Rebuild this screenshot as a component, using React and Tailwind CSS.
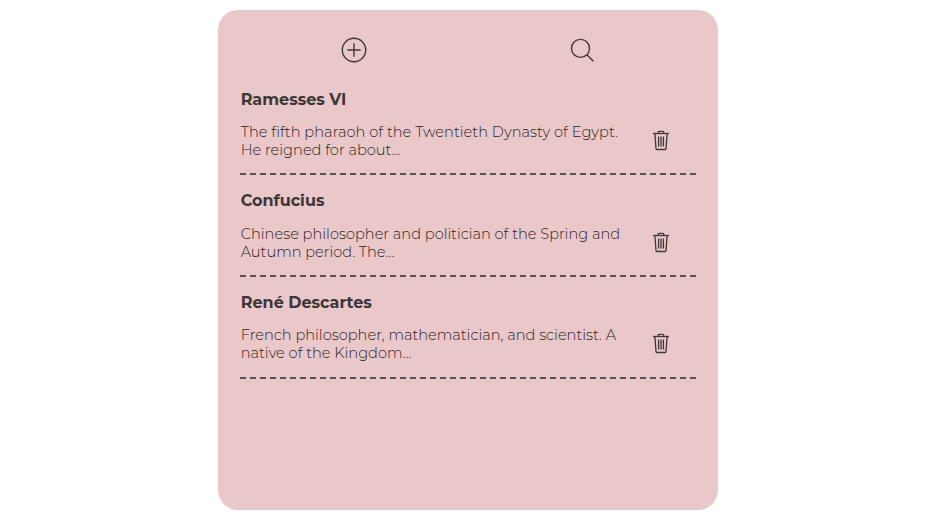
const notes = [
  {
    title: 'Ramesses VI',
    lines: ['The fifth pharaoh of the Twentieth Dynasty of Egypt.', 'He reigned for about...'],
    itemClass: 'h-[85px]',
    bodyClass: 'mt-[13px]',
    firstLineClass: 'tracking-[0.04px]',
  },
  {
    title: 'Confucius',
    lines: ['Chinese philosopher and politician of the Spring and', 'Autumn period. The...'],
    itemClass: 'mt-4 h-[86px]',
    bodyClass: 'mt-[14px]',
    firstLineClass: '',
  },
  {
    title: 'René Descartes',
    lines: ['French philosopher, mathematician, and scientist. A', 'native of the Kingdom...'],
    itemClass: 'mt-4 h-[86px]',
    bodyClass: 'mt-[13px]',
    firstLineClass: '',
  },
];

function PlusIcon() {
  return (
    <svg className="block h-7 w-7" viewBox="0 0 28 28" fill="none" stroke="#403838" strokeWidth="1.4">
      <circle cx="14" cy="14" r="11.7" />
      <path d="M7.3 14h13.4M14 7.3v13.4" />
    </svg>
  );
}

function SearchIcon() {
  return (
    <svg className="block h-7 w-7" viewBox="0 0 28 28" fill="none" stroke="#403838" strokeWidth="1.4">
      <circle cx="12.5" cy="12.4" r="9" />
      <path d="M18.900 18.800l6.500 6.500" />
    </svg>
  );
}

function TrashIcon() {
  return (
    <svg className="block h-[22px] w-5" viewBox="0 0 20 22" fill="none" stroke="#403838">
      <path d="M2 4.500h16" strokeWidth="1.3" />
      <path d="M7.200 4.200V3.400q0-1.100 1.100-1.100h3.400q1.100 0 1.100 1.100v.8" strokeWidth="1.3" />
      <path d="M3.900 4.600l1.100 15q.1.900 1 .9h8q.900 0 1-.9L16.100 4.600" strokeWidth="1.300" />
      <path d="M7.600 7.500v9.900M10 7.500v9.900M12.400 7.500v9.900" strokeWidth="1.300" />
    </svg>
  );
}

function Note({ note }) {
  return (
    <li className={`border-b-2 border-dashed border-[#5a5152] ${note.itemClass}`}>
      <h2 className="pl-[0.7px] text-[16px] leading-5 font-bold whitespace-nowrap">{note.title}</h2>
      <div className={`flex ${note.bodyClass}`}>
        <p className="w-[411px] pl-[0.7px] text-[14.6px] leading-[18px] font-light text-[#2a2425]">
          <span className={`block whitespace-nowrap ${note.firstLineClass}`}>{note.lines[0]}</span>
          <span className="block whitespace-nowrap">{note.lines[1]}</span>
        </p>
        <button aria-label="Delete" className="mt-[6px] h-[22px]">
          <TrashIcon />
        </button>
      </div>
    </li>
  );
}

export default function App() {
  return (
    <main className="h-[522px] bg-white pt-[10px] pl-[218px] font-['Montserrat','Inter',sans-serif] text-[#3d3637]">
      <section className="h-[500px] w-[500px] rounded-[20px] bg-[#eac7c9] px-[22px] pt-[26px]">
        <header className="flex pl-[100px]">
          <button aria-label="Add">
            <PlusIcon />
          </button>
          <button aria-label="Search" className="ml-[200px]">
            <SearchIcon />
          </button>
        </header>
        <ul className="mt-[26px]">
          {notes.map((note) => (
            <Note key={note.title} note={note} />
          ))}
        </ul>
      </section>
    </main>
  );
}
